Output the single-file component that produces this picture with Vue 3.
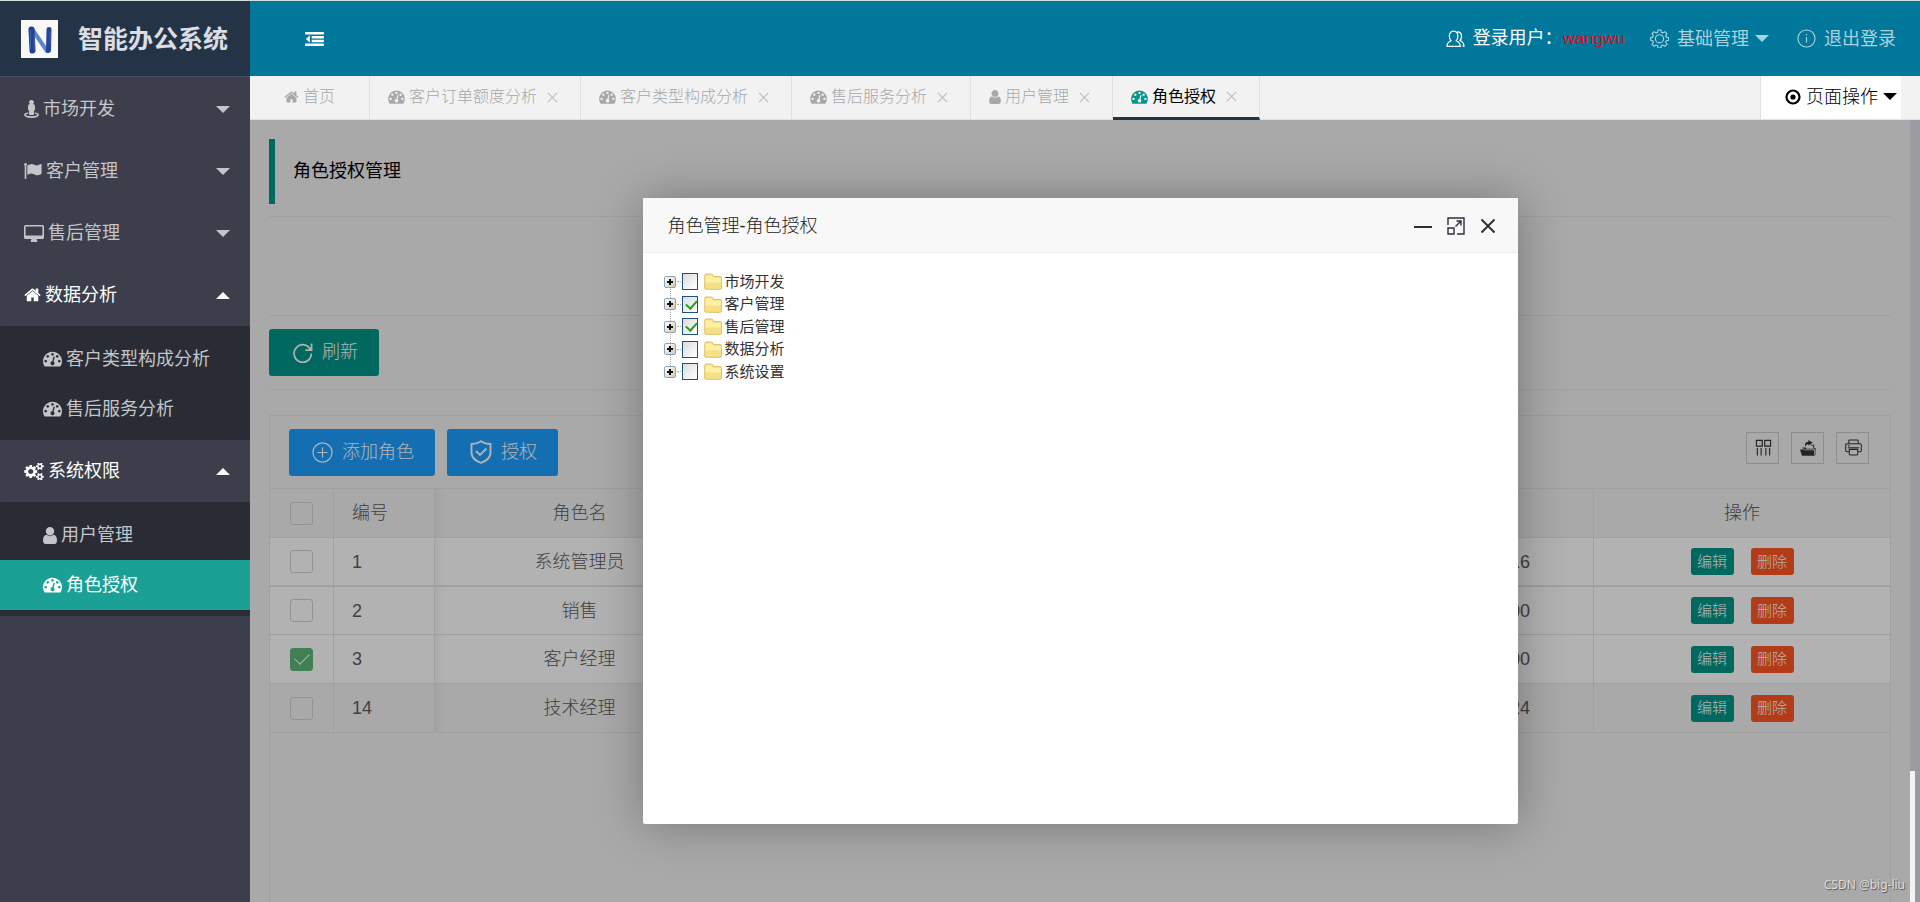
<script setup>
import { ref, h } from 'vue'

const glyphs = {
  home: { vb: '50 200 1690 1400', d: 'M1472 992v480q0 26-19 45t-45 19h-384v-384h-256v384h-384q-26 0-45-19t-19-45v-480q0-1 .5-3t.5-3l575-474 575 474q1 2 1 6zm223-69l-62 74q-8 9-21 11h-3q-13 0-21-7l-692-577-692 577q-12 8-24 7-13-2-21-11l-62-74q-8-10-7-23.5t11-21.5l719-599q32-26 76-26t76 26l244 204v-195q0-14 9-23t23-9h192q14 0 23 9t9 23v408l219 182q10 8 11 21.5t-7 23.5z' },
  dashboard: { vb: '0 200 1792 1500', d: 'M384 1152q0-53-37.5-90.5t-90.5-37.5-90.5 37.5-37.5 90.5 37.5 90.5 90.5 37.5 90.5-37.5 37.5-90.5zm192-448q0-53-37.5-90.5t-90.5-37.5-90.5 37.5-37.5 90.5 37.5 90.5 90.5 37.5 90.5-37.5 37.5-90.5zm428 481l101-382q6-26-7.5-48.5t-38.5-29.5-48 6.5-30 39.5l-101 382q-60 5-107 43.5t-63 98.5q-20 77 20 146t117 89 146-20 89-117q16-60-6-117t-72-91zm660-33q0-53-37.5-90.5t-90.5-37.5-90.5 37.5-37.5 90.5 37.5 90.5 90.5 37.5 90.5-37.5 37.5-90.5zm-640-640q0-53-37.5-90.5t-90.5-37.5-90.5 37.5-37.5 90.5 37.5 90.5 90.5 37.5 90.5-37.5 37.5-90.5zm448 192q0-53-37.5-90.5t-90.5-37.5-90.5 37.5-37.5 90.5 37.5 90.5 90.5 37.5 90.5-37.5 37.5-90.5zm320 448q0 261-141 483-19 29-54 29h-1402q-35 0-54-29-141-221-141-483 0-182 71-348t191-286 286-191 348-71 348 71 286 191 191 286 71 348z' },
  user: { vb: '256 128 1280 1536', d: 'M1536 1399q0 109-62.5 187t-150.5 78h-854q-88 0-150.5-78t-62.5-187q0-85 8.5-160.5t31.5-152 58.5-131 94-89 134.5-34.5q131 128 313 128t313-128q76 0 134.5 34.5t94 89 58.5 131 31.5 152 8.5 160.5zm-256-887q0 159-112.5 271.5t-271.5 112.5-271.5-112.5-112.5-271.5 112.5-271.5 271.5-112.5 271.5 112.5 112.5 271.5z' },
  cogs: { vb: '-64 64 1920 1664', d: 'M832 896q0-106-75-181t-181-75-181 75-75 181 75 181 181 75 181-75 75-181zm768 512q0-52-38-90t-90-38-90 38-38 90q0 53 37.5 90.5t90.5 37.5 90.5-37.5 37.5-90.5zm0-1024q0-52-38-90t-90-38-90 38-38 90q0 53 37.5 90.5t90.5 37.5 90.5-37.5 37.5-90.5zm-384 421v185q0 10-7 19.5t-16 10.5l-155 24q-11 35-32 76 34 48 90 115 7 11 7 20 0 12-7 19-23 30-82.5 89.5t-78.5 59.5q-11 0-21-7l-115-90q-37 19-77 31-11 108-23 155-7 24-30 24h-186q-11 0-20-7.5t-10-17.5l-23-153q-34-10-75-31l-118 89q-7 7-20 7-11 0-21-8-144-133-144-160 0-9 7-19 10-14 41-53t47-61q-23-44-35-82l-152-24q-10-1-17-9.5t-7-19.5v-185q0-10 7-19.5t16-10.5l155-24q11-35 32-76-34-48-90-115-7-11-7-20 0-12 7-20 22-30 82-89t79-59q11 0 21 7l115 90q34-18 77-32 11-108 23-154 7-24 30-24h186q11 0 20 7.5t10 17.5l23 153q34 10 75 31l118-89q8-7 20-7 11 0 21 8 144 133 144 160 0 8-7 19-12 16-42 54t-45 60q23 48 34 82l152 23q10 2 17 10.5t7 19.5zm640 533v140q0 16-149 31-12 27-30 52 51 113 51 138 0 4-4 7-122 71-124 71-8 0-46-47t-52-68q-20 2-30 2t-30-2q-14 21-52 68t-46 47q-2 0-124-71-4-3-4-7 0-25 51-138-18-25-30-52-149-15-149-31v-140q0-16 149-31 13-29 30-52-51-113-51-138 0-4 4-7 4-2 35-20t59-34 30-16q8 0 46 46.5t52 67.5q20-2 30-2t30 2q51-71 92-112l6-2q4 0 124 70 4 3 4 7 0 25-51 138 17 23 30 52 149 15 149 31zm0-1024v140q0 16-149 31-12 27-30 52 51 113 51 138 0 4-4 7-122 71-124 71-8 0-46-47t-52-68q-20 2-30 2t-30-2q-14 21-52 68t-46 47q-2 0-124-71-4-3-4-7 0-25 51-138-18-25-30-52-149-15-149-31v-140q0-16 149-31 13-29 30-52-51-113-51-138 0-4 4-7 4-2 35-20t59-34 30-16q8 0 46 46.5t52 67.5q20-2 30-2t30 2q51-71 92-112l6-2q4 0 124 70 4 3 4 7 0 25-51 138 17 23 30 52 149 15 149 31z' },
  flag: { vb: '0 0 18 16', d: 'M1.500 0a1.500 1.500 0 0 1 .8 2.700V15.500q0 .5-.5.5h-.6q-.5 0-.5-.5V2.700A1.500 1.500 0 0 1 1.500 0zM3.300 2.600Q6 .8 8 1q1.500.2 3.500 1.200 1.800.7 5.200-1.100.8-.3.9.4v8.800q0 .6-.6.9-2.600 1.400-4.700 1.100-3.500-1.900-5.500-1.700-1.500.2-3.500 1.400z' },
  desktop: { vb: '0 0 20 17', d: 'M1.500 0h17q1.500 0 1.500 1.500v11q0 1.500-1.500 1.500h-6q.1 1 .8 1.800.3 1.200-.5 1.200H7.200q-.8 0-.5-1.200.7-.8.8-1.800h-6Q0 14 0 12.500v-11Q0 0 1.500 0zm.1 1.500v8.900h16.800V1.500z' },
  street: { vb: '0 0 15 18', d: 'M7.500 0a2.200 2.200 0 0 1 1.600 3.900q1.900.3 1.900 1.900v3.800q0 .9-1 .9v3.700q0 .8-.8.8H5.800q-.8 0-.8-.8v-3.700q-1 0-1-.9V5.800q0-1.600 1.900-1.900A2.200 2.200 0 0 1 7.500 0zM4.200 12.500v1.200q-2.500.4-2.700 1.100.6 1.400 6 1.500 5.400-.1 6-1.500-.2-.7-2.700-1.100v-1.200q4.200.6 4.200 2.300-.3 3-7.500 3.200Q.3 17.800 0 14.800q0-1.700 4.200-2.300z' },
  outdent: { vb: '0 0 20 15', d: 'M0 0h20v2.800H0zM7 4.200h13v2.700H7zM7 8.200h13v2.700H7zM0 12.200h20V15H0zM5 3.600v7.800L.8 7.500z' },
  target: { vb: '0 0 16 16', d: 'M8 .4a7.600 7.600 0 1 1 0 15.200A7.600 7.600 0 0 1 8 .4zm0 2.200a5.400 5.400 0 1 0 0 10.800A5.400 5.400 0 0 0 8 2.600zM8 5.400a2.600 2.600 0 1 1 0 5.200 2.600 2.600 0 0 1 0-5.200z' },
  down: { vb: '0 0 14 7', d: 'M0 0h14L7 7z' },
  up: { vb: '0 0 14 7', d: 'M0 7h14L7 0z' },
  friends: { vb: '0 0 20 19', line: 1.3, d: 'M1 17.200q0-4 4.300-5.800Q3.500 9.500 3.500 6.500 3.700 1.500 8 1.300q4.400.2 4.500 5.200 0 3-1.800 4.900 4.300 1.800 4.300 5.800zM12 1.700q4.200.5 4.400 4.800 0 2.700-1.600 4.600 3.900 1.900 4.200 6h-1.600' },
  gear: { vb: '0 0 20 20', line: 1.2, d: 'M8.500 1h3l.5 2.400 1.600.7 2.100-1.300 2.100 2.100-1.300 2.100.7 1.600 2.400.5v2.800l-2.400.5-.7 1.600 1.300 2.100-2.100 2.100-2.100-1.300-1.600.7-.5 2.400h-3L8 17.600l-1.600-.7-2.100 1.300-2.100-2.100L3.500 14l-.7-1.600-2.100-.5V9.100l2.100-.5L3.500 7 2.200 4.900l2.100-2.100 2.100 1.300L8 3.400zM10 6a4.300 4.300 0 1 0 0 8.600A4.300 4.300 0 0 0 10 6z' },
  info: { vb: '0 0 20 20', line: 1.2, d: 'M10 1a9 9 0 1 1 0 18 9 9 0 0 1 0-18zM10 8.500v6M10 5.300v1.500' },
  refresh: { vb: '0 0 22 22', line: 1.8, d: 'M19.500 8.500A9 9.200 0 1 0 20.200 12M20.500 1.500v7h-6.500' },
  plus: { vb: '0 0 22 22', line: 1.3, d: 'M11 1a10 10 0 1 1 0 20 10 10 0 0 1 0-20zM11 5.500v11M5.500 11h11' },
  shield: { vb: '0 0 22 24', line: 1.9, d: 'M11 1.200Q15 4 20.500 4v9.500Q19.500 20 11 22.800 2.500 20 1.500 13.500V4Q7 4 11 1.200zM6 11l4 4 6.500-6.500' },
  columns: { vb: '0 0 18 18', line: 1.2, d: 'M1.500 1.500h6.200v6H1.500zM10.300 1.500h6.200v6h-6.200zM2.500 9.500v8M6.500 9.500v8M11.500 9.500v8M15.500 9.500v8' },
  export: { vb: '0 0 18 18', d: 'M0 11h4l1 1h11v5q0 .8-.8.8H2.800q-.7 0-.9-.7zM8.800 1l4.700 3-4.700 3V5.200Q6.500 5.200 5.500 8 4.200 3.500 8.800 2.900zM2.500 10V9h4v1.200H16v1H4.700l-1-1.200zM11 6h4v3.500h1.500V17H15v-6h-1V7h-3z' },
  printer: { vb: '0 0 18 18', line: 1.1, d: 'M4 5V2q0-1 1-1h8q1 0 1 1v3M4 13.500H2q-1.300 0-1.300-1.300V6.500Q.7 5 2 5h14q1.300 0 1.300 1.500v5.700q0 1.300-1.300 1.300h-2M4.500 11h9v5q0 1-1 1h-7q-1 0-1-1zM3 7.200h2M3 9.200h12' },
  close: { vb: '0 0 12 12', line: 1.1, d: 'M1 1l10 10M11 1L1 11' },
  closeBold: { vb: '0 0 16 16', line: 1.9, d: 'M1.500 1.500l13 13M14.500 1.500l-13 13' },
  minimize: { vb: '0 0 18 18', line: 2, d: 'M0 10h18' },
  maximize: { vb: '0 0 18 18', line: 1.4, d: 'M1 8V1h16v16H10M1 11h6v6H1zM8.500 9.500L14 4M9.500 4H14v4.500' }
}

const Icon = (props) => {
  const g = glyphs[props.name]
  const [, , w, hh] = g.vb.split(' ').map(Number)
  return h('svg', {
    viewBox: g.vb,
    width: props.w,
    height: Math.round((props.w * hh) / w),
    'aria-hidden': 'true',
    fill: g.line ? 'none' : 'currentColor',
    'fill-rule': 'evenodd',
    stroke: g.line ? 'currentColor' : 'none',
    'stroke-width': g.line
  }, [h('path', { d: g.d })])
}
Icon.props = ['name', 'w']

const menu = [
  { icon: 'street', w: 15, text: '市场开发' },
  { icon: 'flag', w: 18, text: '客户管理' },
  { icon: 'desktop', w: 20, text: '售后管理' },
  { icon: 'home', w: 17, text: '数据分析', children: [
    { icon: 'dashboard', w: 19, text: '客户类型构成分析' },
    { icon: 'dashboard', w: 19, text: '售后服务分析' }
  ] },
  { icon: 'cogs', w: 20, text: '系统权限', children: [
    { icon: 'user', w: 14, text: '用户管理' },
    { icon: 'dashboard', w: 19, text: '角色授权', active: true }
  ] }
]
const tabs = [
  { icon: 'home', w: 15, text: '首页', fixed: true },
  { icon: 'dashboard', w: 17, text: '客户订单额度分析' },
  { icon: 'dashboard', w: 17, text: '客户类型构成分析' },
  { icon: 'dashboard', w: 17, text: '售后服务分析' },
  { icon: 'user', w: 12, text: '用户管理' },
  { icon: 'dashboard', w: 17, text: '角色授权', active: true }
]
const tools = [
  { icon: 'columns', label: '筛选列' },
  { icon: 'export', label: '导出' },
  { icon: 'printer', label: '打印' }
]
const rows = ref([
  { id: 1, name: '系统管理员', sec: '16', checked: false },
  { id: 2, name: '销售', sec: '00', checked: false },
  { id: 3, name: '客户经理', sec: '00', checked: true },
  { id: 14, name: '技术经理', sec: '24', checked: false, hover: true }
])
const tree = ref([
  { text: '市场开发', checked: false },
  { text: '客户管理', checked: true },
  { text: '售后管理', checked: true },
  { text: '数据分析', checked: false },
  { text: '系统设置', checked: false }
])
</script>

<template>
  <div class="app">
    <aside class="side">
      <div class="logo">
        <svg class="mark" viewBox="0 0 37 38" width="37" height="38" aria-hidden="true">
          <rect width="37" height="38" fill="#f8f8f8" />
          <path d="M11 9L26 31" stroke="#5f86c8" stroke-width="4" stroke-linecap="round" />
          <path d="M10.500 9.500L11.500 30.500" stroke="#233f8e" stroke-width="6" stroke-linecap="round" />
          <path d="M28 9.500L27.500 30.500" stroke="#26459a" stroke-width="5" stroke-linecap="round" />
          <path d="M9.500 10V29M13 14V30M29 12V24" stroke="#3d64b4" stroke-width="1" />
        </svg>
        <h1>智能办公系统</h1>
      </div>
      <nav class="nav">
        <template v-for="m in menu" :key="m.text">
          <a href="#" class="item" :class="{ open: m.children }">
            <Icon :name="m.icon" :w="m.w" /><span>{{ m.text }}</span>
            <Icon class="caret" :name="m.children ? 'up' : 'down'" :w="14" />
          </a>
          <div v-if="m.children" class="sub">
            <a v-for="c in m.children" :key="c.text" href="#" :class="{ active: c.active }">
              <Icon :name="c.icon" :w="c.w" /><span>{{ c.text }}</span>
            </a>
          </div>
        </template>
      </nav>
    </aside>

    <div class="main">
      <header class="top">
        <button class="toggle" aria-label="收起菜单"><Icon name="outdent" :w="19" /></button>
        <div class="account">
          <a href="#" class="who"><Icon name="friends" :w="19" /><span>登录用户：<b>wangwu</b></span></a>
          <a href="#"><Icon name="gear" :w="19" /><span>基础管理</span><Icon name="down" :w="14" class="drop" /></a>
          <a href="#"><Icon name="info" :w="19" /><span>退出登录</span></a>
        </div>
      </header>

      <div class="tabs">
        <div v-for="t in tabs" :key="t.text" class="tab" :class="{ active: t.active, fixed: t.fixed }">
          <a href="#"><Icon :name="t.icon" :w="t.w" /><span>{{ t.text }}</span></a>
          <button v-if="!t.fixed" aria-label="关闭"><Icon name="close" :w="11" /></button>
        </div>
        <button class="page-op"><Icon name="target" :w="16" /><span>页面操作</span><Icon name="down" :w="14" /></button>
      </div>

      <div class="frame">
        <div class="page">
          <div class="quote"><h2>角色授权管理</h2></div>
          <div class="blank"></div>
          <div class="refresh"><button class="btn green"><Icon name="refresh" :w="21" />刷新</button></div>

          <section class="grid">
            <div class="bar">
              <button class="btn blue"><Icon name="plus" :w="21" />添加角色</button>
              <button class="btn blue"><Icon name="shield" :w="22" />授权</button>
              <div class="tools">
                <button v-for="t in tools" :key="t.icon" :aria-label="t.label"><Icon :name="t.icon" :w="17" /></button>
              </div>
            </div>
            <table>
              <colgroup><col class="c1"><col class="c2"><col class="c3"><col><col class="c5"></colgroup>
              <thead>
                <tr>
                  <th><input type="checkbox" aria-label="全选"></th>
                  <th class="left">编号</th>
                  <th class="edge">角色名</th>
                  <th></th>
                  <th>操作</th>
                </tr>
              </thead>
              <tbody>
                <tr v-for="r in rows" :key="r.id" :class="{ hover: r.hover }">
                  <td><input v-model="r.checked" type="checkbox" :aria-label="r.name"></td>
                  <td class="left">{{ r.id }}</td>
                  <td class="edge">{{ r.name }}</td>
                  <td class="time">{{ r.sec }}</td>
                  <td>
                    <div class="ops">
                      <button class="mini edit">编辑</button>
                      <button class="mini del">删除</button>
                    </div>
                  </td>
                </tr>
              </tbody>
            </table>
          </section>
        </div>

        <div class="shade">
          <div class="dialog" role="dialog" aria-labelledby="dlg-title">
            <div class="dlg-head">
              <h3 id="dlg-title">角色管理-角色授权</h3>
              <button aria-label="最小化"><Icon name="minimize" :w="18" /></button>
              <button aria-label="最大化"><Icon name="maximize" :w="18" /></button>
              <button aria-label="关闭"><Icon name="closeBold" :w="16" /></button>
            </div>
            <ul class="tree">
              <li v-for="(n, i) in tree" :key="n.text">
                <button class="expand" aria-label="展开"></button>
                <i class="dots"></i>
                <input :id="'node' + i" v-model="n.checked" type="checkbox">
                <svg class="folder" viewBox="0 0 18 17" width="18" height="17" aria-hidden="true">
                  <path d="M.7 2.500Q.7 1 2 1h5.500q1 0 1.500 1l.8 1.500H16q1.500 0 1.500 1.300v10q0 1.500-1.500 1.500H2Q.7 16.300.7 15z" fill="#f5e184" stroke="#e3c06c" />
                  <path d="M1.500 2.500h6l2 2.500h7.300v4.500H1.500z" fill="#fbf0a6" />
                </svg>
                <label :for="'node' + i">{{ n.text }}</label>
              </li>
            </ul>
          </div>
        </div>
        <div class="scroll"><div class="thumb"></div></div>
        <span class="credit">CSDN @big-liu</span>
      </div>
    </div>
  </div>
</template>

<style>
html, body { height: 100%; margin: 0; overflow: hidden; }
</style>

<style scoped>
.app {
  box-sizing: border-box;
  display: flex;
  height: 100vh;
  border-top: 1px solid #cfdde0;
  font-family: "Liberation Sans", "Noto Sans CJK SC", sans-serif;
  font-size: 18px;
  font-weight: 400;
  line-height: 24px;
  overflow: hidden;
}
.app * { box-sizing: border-box; }
a { color: inherit; text-decoration: none; }
button { padding: 0; border: 0; background: none; color: inherit; font: inherit; cursor: pointer; }
h1, h2, h3 { margin: 0; font-weight: inherit; }
svg { display: block; flex: none; }

.side { flex: none; width: 250px; background: #3c3f4b; color: #c4c5c9; }
.logo {
  display: flex;
  align-items: center;
  gap: 20px;
  height: 76px;
  padding-left: 21px;
  border-bottom: 1px solid #4a5365;
  background: #243346;
}
.logo h1 { color: #dadde1; font-size: 25px; font-weight: 700; line-height: 36px; }
.nav { padding-top: 1px; }
.item { display: flex; align-items: center; gap: 4px; height: 62px; padding: 0 20px 0 24px; }
.item.open { color: #fff; }
.caret { margin-left: auto; }
.sub { padding: 8px 0 6px; border-radius: 2px; background: #2a2c35; }
.sub a { display: flex; align-items: center; gap: 4px; height: 50px; padding-left: 43px; }
.sub a.active { background: #1aa094; color: #fff; }

.main { display: flex; flex: 1; flex-direction: column; min-width: 0; }
.top {
  display: flex;
  align-items: center;
  justify-content: space-between;
  height: 75px;
  padding: 0 24px 0 55px;
  background: #00779b;
  color: #fff;
}
.account { display: flex; gap: 25px; color: #a8d2de; }
.account a { display: flex; align-items: center; gap: 8px; }
.account .who { color: #fff; }
.account b { color: #e60b1a; font-size: 17px; font-weight: 400; }
.account .drop { margin: 0 3px 0 -2px; }

.tabs { display: flex; height: 44px; padding-right: 19px; border-bottom: 1px solid #e2e2e2; background: #f2f2f2; color: #a6a9ab; font-size: 16px; font-weight: 300; }
.tab { display: flex; align-items: center; gap: 10px; padding: 0 22px 1px 18px; border-right: 1px solid #e0e0e0; }
.tab.fixed { padding: 0 34px 1px; }
.tab a { display: flex; align-items: center; gap: 4px; }
.tab button { color: #b8babc; }
.tab.active { height: 44px; padding-bottom: 0; border-bottom: 3px solid #243346; color: #000; font-weight: 400; }
.tab.active a svg { color: #009688; }
.page-op { display: flex; align-items: center; gap: 5px; margin-left: auto; padding: 0 4px 2px 24px; border-left: 1px solid #e0e0e0; background: #fff; color: #000; font-size: 18px; }

.frame { position: relative; display: flex; flex: 1; min-height: 0; overflow: hidden; background: #f2f2f2; }
.page { display: flex; flex: 1; flex-direction: column; padding: 19px 29px 0 19px; min-width: 0; }
.quote { padding-bottom: 12px; border-bottom: 1px solid #e6e6e6; }
.quote h2 { padding: 20px 18px 21px; border-left: 6px solid #009688; color: #000; font-size: 18px; line-height: 24px; }
.blank { height: 99px; border-bottom: 1px solid #e6e6e6; }
.refresh { padding: 13px 0; border-bottom: 1px solid #e6e6e6; }
.btn { display: flex; align-items: center; gap: 9px; height: 47px; padding: 0 21px 1px 23px; border-radius: 3px; color: #fff; font-weight: 300; line-height: 24px; }
.green { background: #009688; }
.blue { background: #1e9fff; }

.grid { flex: 1; margin-top: 25px; border: 1px solid #e6e6e6; border-bottom: 0; }
.bar { display: flex; gap: 12px; padding: 13px 21px 12px 19px; border-bottom: 1px solid #e6e6e6; }
.tools { display: flex; gap: 12px; margin: 3px 0 0 auto; color: #333; }
.tools button { display: grid; place-items: center; width: 33px; height: 32px; padding: 0 0 1px 2px; border: 1px solid #ccc; }
table { width: 100%; border-collapse: separate; border-spacing: 0; table-layout: fixed; color: #5c5c5c; font-weight: 300; }
.c1 { width: 64px; }
.c2 { width: 101px; }
.c3 { width: 290px; }
.c5 { width: 296px; }
th, td { height: 49px; padding: 0; border-right: 1px solid #e6e6e6; border-bottom: 1px solid #e6e6e6; font-weight: inherit; text-align: center; }
th:last-child, td:last-child { border-right: 0; }
td { background-color: #fff; }
tbody tr:first-child td { border-bottom-width: 2px; }
tbody tr:nth-child(2) td { height: 48px; }
.hover td { background-color: #f2f2f2; }
.left { padding-left: 18px; text-align: left; }
.edge { background-image: linear-gradient(to right, rgba(0, 0, 0, .04), transparent 10px); }
.time { padding-right: 63px; text-align: right; }
.ops { display: flex; justify-content: center; gap: 17px; }
.mini { width: 43px; height: 27px; border-radius: 3px; color: #fff; font-size: 15px; line-height: 26px; }
.edit { background: #009688; }
.del { background: #ff5722; }
table input { display: block; position: relative; width: 23px; height: 23px; margin: 0 0 0 20px; border: 1px solid #d2d2d2; border-radius: 3px; appearance: none; }
table input:checked { border-color: #5fb878; background: #5fb878; }
table input:checked::after { position: absolute; top: 4px; left: 4px; width: 13px; height: 7px; border: solid #fff; border-width: 0 0 1px 1px; content: ""; transform: rotate(-45deg); }

.shade { position: absolute; inset: 0 10px 0 0; display: flex; align-items: center; justify-content: center; background: rgba(0, 0, 0, .3); overflow: hidden; }
.dialog { display: flex; flex-direction: column; width: 875px; max-width: 90%; height: 80%; border-radius: 2px; background: #fff; box-shadow: 1px 1px 50px rgba(0, 0, 0, .3); }
.dlg-head { display: flex; align-items: center; gap: 15px; height: 55px; padding: 1px 22px 0 25px; border-bottom: 1px solid #eee; background: #f8f8f8; color: #2e2d3c; }
.dlg-head h3 { flex: 1; color: #222; font-size: 18px; font-weight: 300; }
.tree { display: grid; grid-template-rows: repeat(5, 1fr); height: 113px; margin: 17px 0 0 21px; padding: 0; list-style: none; color: #333; font-size: 15px; line-height: 22px; }
.tree li { display: flex; align-items: center; position: relative; }
.tree li:not(:last-child)::after { position: absolute; top: 17px; left: 6px; height: 11px; border-left: 1px dotted #aaa; content: ""; }
.expand { width: 12px; height: 12px; border: 1px solid #8ba4bd; border-radius: 2px; background: linear-gradient(#111, #111) center / 6px 2px no-repeat, linear-gradient(#111, #111) center / 2px 6px no-repeat, linear-gradient(135deg, #fff, #cfcabb); }
.dots { width: 4px; margin: 0 1px; border-top: 1px dotted #aaa; }
.tree input { position: relative; width: 16px; height: 17px; margin: 0 6px 0 0; border: 1px solid #1c5180; background: linear-gradient(135deg, #dcdcd7, #fff); appearance: none; }
.tree input:checked::after { position: absolute; top: 3px; left: 3px; width: 9px; height: 5px; border: solid #21a121; border-width: 0 0 2px 2px; content: ""; transform: rotate(-48deg); }
.folder { margin-right: 3px; }

.scroll { position: absolute; inset: 0 0 0 auto; width: 10px; background: #9b9ca1; }
.thumb { position: absolute; right: 5px; bottom: 0; width: 5px; height: 131px; background: #f4f4f4; }
.credit { position: absolute; right: 15px; bottom: 8px; color: #dcdcdc; font-family: "Noto Sans", sans-serif; font-size: 12px; font-weight: 400; line-height: 18px; text-shadow: 1px 1px 1px #555; }
</style>
